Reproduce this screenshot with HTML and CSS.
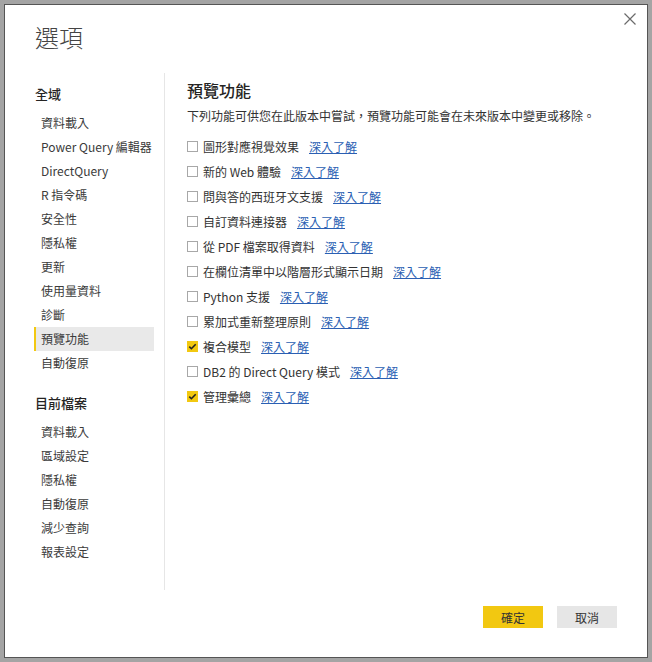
FILE: index.html
```html
<!DOCTYPE html>
<html lang="zh-TW">
<head>
<meta charset="utf-8">
<link rel="stylesheet" href="styles.css">
</head>
<body>
<div class="dialog">
  <button class="close" aria-label="close">
    <svg width="12" height="12" viewBox="0 0 12 12"><path d="M0.5 0.5 L11.5 11.5 M11.5 0.5 L0.5 11.5" stroke="#6b6b6b" stroke-width="1.2" fill="none"/></svg>
  </button>
  <h1 class="title">選項</h1>
  <div class="body">
    <nav class="sidebar">
      <div class="nav-head">全域</div>
      <ul class="nav-list">
        <li class="nav-item">資料載入</li>
        <li class="nav-item">Power Query 編輯器</li>
        <li class="nav-item">DirectQuery</li>
        <li class="nav-item">R 指令碼</li>
        <li class="nav-item">安全性</li>
        <li class="nav-item">隱私權</li>
        <li class="nav-item">更新</li>
        <li class="nav-item">使用量資料</li>
        <li class="nav-item">診斷</li>
        <li class="nav-item active">預覽功能</li>
        <li class="nav-item">自動復原</li>
      </ul>
      <div class="nav-head second">目前檔案</div>
      <ul class="nav-list">
        <li class="nav-item">資料載入</li>
        <li class="nav-item">區域設定</li>
        <li class="nav-item">隱私權</li>
        <li class="nav-item">自動復原</li>
        <li class="nav-item">減少查詢</li>
        <li class="nav-item">報表設定</li>
      </ul>
    </nav>
    <main class="content">
      <h2 class="section-title">預覽功能</h2>
      <p class="desc">下列功能可供您在此版本中嘗試，預覽功能可能會在未來版本中變更或移除。</p>
      <ul class="features">
        <li class="feature"><span class="cb"></span><span class="label">圖形對應視覺效果</span><a class="more" href="#">深入了解</a></li>
        <li class="feature"><span class="cb"></span><span class="label">新的 Web 體驗</span><a class="more" href="#">深入了解</a></li>
        <li class="feature"><span class="cb"></span><span class="label">問與答的西班牙文支援</span><a class="more" href="#">深入了解</a></li>
        <li class="feature"><span class="cb"></span><span class="label">自訂資料連接器</span><a class="more" href="#">深入了解</a></li>
        <li class="feature"><span class="cb"></span><span class="label">從 PDF 檔案取得資料</span><a class="more" href="#">深入了解</a></li>
        <li class="feature"><span class="cb"></span><span class="label">在欄位清單中以階層形式顯示日期</span><a class="more" href="#">深入了解</a></li>
        <li class="feature"><span class="cb"></span><span class="label">Python 支援</span><a class="more" href="#">深入了解</a></li>
        <li class="feature"><span class="cb"></span><span class="label">累加式重新整理原則</span><a class="more" href="#">深入了解</a></li>
        <li class="feature"><span class="cb checked"><svg width="11" height="11" viewBox="0 0 11 11"><path d="M2.3 5.6 L4.4 7.7 L8.7 3.2" stroke="#222" stroke-width="1.6" fill="none"/></svg></span><span class="label">複合模型</span><a class="more" href="#">深入了解</a></li>
        <li class="feature"><span class="cb"></span><span class="label">DB2 的 Direct Query 模式</span><a class="more" href="#">深入了解</a></li>
        <li class="feature"><span class="cb checked"><svg width="11" height="11" viewBox="0 0 11 11"><path d="M2.3 5.6 L4.4 7.7 L8.7 3.2" stroke="#222" stroke-width="1.6" fill="none"/></svg></span><span class="label">管理彙總</span><a class="more" href="#">深入了解</a></li>
      </ul>
    </main>
  </div>
  <div class="footer">
    <button class="btn primary">確定</button>
    <button class="btn">取消</button>
  </div>
</div>
</body>
</html>
```

FILE: styles.css
```css
* { box-sizing: border-box; }
html, body {
  margin: 0;
  padding: 0;
}
body {
  background: #a4a4a4;
  padding: 4px;
  font-family: "Noto Sans CJK TC", "Noto Sans", sans-serif;
  color: #333;
}
.dialog {
  position: relative;
  width: 644px;
  height: 654px;
  background: #fff;
  border: 1px solid #555;
  display: flex;
  flex-direction: column;
}
.close {
  position: absolute;
  top: 8px;
  right: 11px;
  width: 12px;
  height: 12px;
  padding: 0;
  border: 0;
  background: transparent;
  display: flex;
}
.title {
  margin: 0;
  padding: 16px 0 0 30px;
  height: 68px;
  font-size: 24px;
  line-height: 32px;
  font-weight: 300;
  color: #444;
}
.body {
  display: flex;
  height: 517px;
}
.sidebar {
  width: 160px;
  flex: none;
  border-right: 1px solid #e6e6e6;
  padding: 10px 10px 0 29px;
}
.nav-head {
  font-size: 13px;
  line-height: 22px;
  font-weight: 500;
  color: #252423;
  padding-left: 1px;
  margin-bottom: 6px;
}
.nav-head.second { margin-top: 17px; }
.nav-list {
  list-style: none;
  margin: 0;
  padding: 0;
}
.nav-item {
  height: 24px;
  line-height: 24px;
  font-size: 12px;
  color: #3b3b3b;
  padding-left: 5px;
  border-left: 2px solid transparent;
  white-space: nowrap;
}
.nav-item.active {
  background: #e9e9e9;
  border-left-color: #f2c811;
}
.content {
  flex: 1;
  padding: 6px 0 0 22px;
}
.section-title {
  margin: 0;
  font-size: 16px;
  line-height: 22px;
  font-weight: 500;
  color: #252423;
}
.desc {
  margin: 5px 0 8px;
  font-size: 12px;
  line-height: 20px;
  color: #333;
}
.features {
  list-style: none;
  margin: 0;
  padding: 0;
}
.feature {
  height: 25px;
  display: flex;
  align-items: center;
  font-size: 12px;
  color: #333;
  white-space: nowrap;
}
.cb {
  width: 11px;
  height: 11px;
  border: 1px solid #a8a8a8;
  margin-right: 5px;
  flex: none;
  display: flex;
  align-items: center;
  justify-content: center;
}
.cb.checked {
  background: #f2c811;
  border-color: #f2c811;
}
.cb.checked svg { flex: none; }
.more {
  margin-left: 10px;
  color: #2b5fb3;
  text-decoration: underline;
}
.footer {
  display: flex;
  justify-content: flex-end;
  gap: 14px;
  padding: 16px 30px 0 0;
}
.btn {
  width: 60px;
  height: 22px;
  border: 0;
  padding: 0;
  font-family: "Noto Sans CJK TC", sans-serif;
  font-size: 12px;
  color: #333;
  background: #e6e6e6;
}
.btn.primary { background: #f2c811; }
```
